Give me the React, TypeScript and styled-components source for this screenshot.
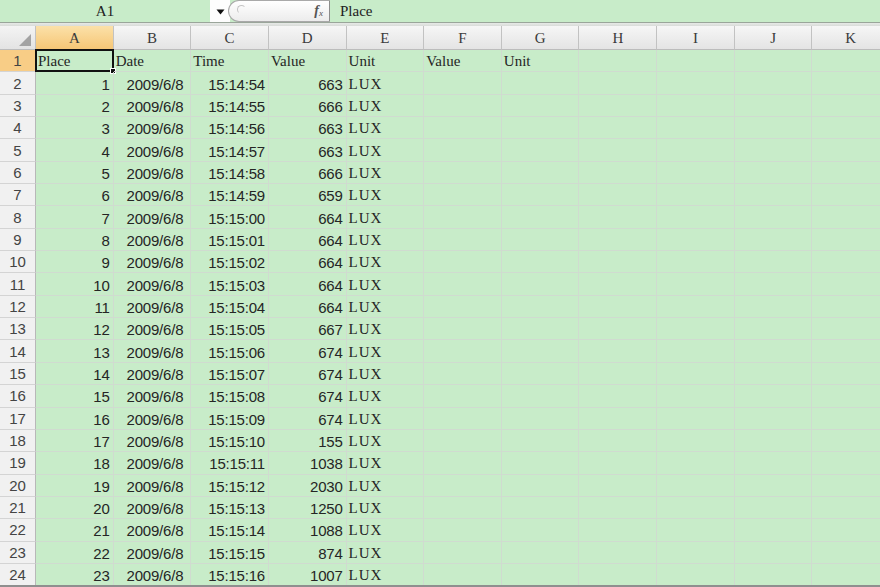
import React from 'react'
import styled, { createGlobalStyle, css } from 'styled-components'

const GlobalStyle = createGlobalStyle`
  html, body {
    margin: 0;
    padding: 0;
    background: #c8ecc9;
    overflow: hidden;
  }
  * {
    box-sizing: border-box;
  }
`

const columns = ['A', 'B', 'C', 'D', 'E', 'F', 'G', 'H', 'I', 'J', 'K']
const values = [663, 666, 663, 663, 666, 659, 664, 664, 664, 664, 664, 667, 674, 674, 674, 674, 155, 1038, 2030, 1250, 1088, 874, 1007]

const pad = (n: number) => (n < 10 ? `0${n}` : `${n}`)

const timeFor = (i: number) => {
  const total = 14 * 60 + 54 + i
  return `15:${pad(Math.floor(total / 60))}:${pad(total % 60)}`
}

type Kind = 'text' | 'num' | 'date' | 'unit'
type CellValue = { text: string; kind: Kind }

const buildRows = (): CellValue[][] => {
  const header: CellValue[] = ['Place', 'Date', 'Time', 'Value', 'Unit', 'Value', 'Unit'].map(t => ({
    text: t,
    kind: 'text' as const,
  }))
  const rows: CellValue[][] = [header]
  values.forEach((v, i) => {
    rows.push([
      { text: `${i + 1}`, kind: 'num' },
      { text: '2009/6/8', kind: 'date' },
      { text: timeFor(i), kind: 'num' },
      { text: `${v}`, kind: 'num' },
      { text: 'LUX', kind: 'unit' },
    ])
  })
  return rows
}

const App: React.FC = () => {
  const rows = buildRows()
  return (
    <>
      <GlobalStyle />
      <Page>
        <FormulaBar>
          <NameBox>A1</NameBox>
          <NameDrop>
            <svg width="9" height="6" viewBox="0 0 9 6">
              <path d="M0.5 0.5 L8.5 0.5 L4.5 5.5 Z" fill="#111" />
            </svg>
          </NameDrop>
          <FxPill>
            <Knob />
            <FxLabel>
              <i>f</i>
              <sub>x</sub>
            </FxLabel>
          </FxPill>
          <FormulaText>Place</FormulaText>
        </FormulaBar>
        <Strip />
        <Sheet>
          <Corner>
            <svg width="12" height="12" viewBox="0 0 12 12">
              <path d="M12 0 L12 12 L0 12 Z" fill="#a3a3a3" />
            </svg>
          </Corner>
          {columns.map((c, i) => (
            <ColHeader key={c} $active={i === 0}>
              {c}
            </ColHeader>
          ))}
          {rows.map((row, r) => (
            <React.Fragment key={r}>
              <RowHeader $active={r === 0}>{r + 1}</RowHeader>
              {columns.map((c, ci) => {
                const cell = row[ci]
                return (
                  <Cell key={c} $kind={cell ? cell.kind : 'text'}>
                    {cell ? cell.text : ''}
                    {r === 0 && ci === 0 && (
                      <Selection>
                        <FillHandle />
                      </Selection>
                    )}
                  </Cell>
                )
              })}
            </React.Fragment>
          ))}
        </Sheet>
        <BottomEdge />
      </Page>
    </>
  )
}

export default App

const Page = styled.div`
  width: 880px;
  height: 587px;
  overflow: hidden;
  position: relative;
  background: #c8ecc9;
`

const FormulaBar = styled.div`
  display: flex;
  align-items: stretch;
  height: 23px;
  background: #c8ecc9;
  border-bottom: 1px solid #9aa59a;
`

const NameBox = styled.div`
  width: 210px;
  display: flex;
  align-items: center;
  justify-content: center;
  font-family: 'Liberation Serif', serif;
  font-size: 15px;
  color: #222;
  padding-top: 1px;
`

const NameDrop = styled.div`
  width: 20px;
  background: #fdfdfd;
  display: flex;
  align-items: center;
  justify-content: center;
  padding-top: 2px;
`

const FxPill = styled.div`
  width: 102px;
  display: flex;
  align-items: center;
  justify-content: space-between;
  padding: 0 6px 0 6px;
  background: linear-gradient(#ffffff, #ececec);
  border: 1px solid #a9a9a9;
  border-right: 1px solid #8c8c8c;
  border-radius: 12px 0 0 12px;
  margin-left: -2px;
`

const Knob = styled.div`
  width: 9px;
  height: 9px;
  border-radius: 50%;
  border: 1px solid #c4c4c4;
  border-right-color: transparent;
  border-bottom-color: transparent;
  margin-top: -4px;
  margin-left: 2px;
`

const FxLabel = styled.div`
  font-family: 'Liberation Serif', serif;
  font-size: 14px;
  color: #555;
  i {
    font-weight: bold;
  }
  sub {
    font-size: 9px;
    font-style: italic;
    vertical-align: -1px;
  }
`

const FormulaText = styled.div`
  flex: 1;
  display: flex;
  align-items: center;
  padding-left: 10px;
  font-family: 'Liberation Serif', serif;
  font-size: 15px;
  color: #222;
  padding-top: 1px;
`

const Strip = styled.div`
  height: 3px;
  background: linear-gradient(#e6e9e6, #d9dcd9);
`

const Sheet = styled.div`
  display: grid;
  grid-template-columns: 36px repeat(11, 77.65px);
  grid-template-rows: 24px repeat(24, 22.35px);
`

const headerBase = css`
  display: flex;
  align-items: center;
  justify-content: center;
  color: #3a3a3a;
  border-right: 1px solid #c2c2c2;
  border-bottom: 1px solid #bcbcbc;
`

const Corner = styled.div`
  ${headerBase};
  align-items: flex-end;
  justify-content: flex-end;
  padding: 0 4px 3px 0;
  background: linear-gradient(#f4f4f4, #e3e3e3);
`

const ColHeader = styled.div<{ $active: boolean }>`
  ${headerBase};
  font-family: 'Liberation Serif', serif;
  font-size: 15px;
  padding-top: 2px;
  background: ${p => (p.$active ? 'linear-gradient(#fbe1a9, #f6c676)' : 'linear-gradient(#f6f6f6, #e4e4e4)')};
  border-bottom-color: ${p => (p.$active ? '#e1a54c' : '#bcbcbc')};
`

const RowHeader = styled.div<{ $active: boolean }>`
  ${headerBase};
  font-family: 'Liberation Sans', sans-serif;
  font-size: 15px;
  color: #444;
  border-bottom-color: #d4d4d4;
  background: ${p => (p.$active ? '#f8cd86' : '#f1f1f1')};
  border-right-color: ${p => (p.$active ? '#e1a54c' : '#b8b8b8')};
`

const Cell = styled.div<{ $kind: Kind }>`
  position: relative;
  display: flex;
  align-items: center;
  white-space: nowrap;
  color: #252525;
  font-size: 15px;
  border-right: 1px solid #d0dbd0;
  border-bottom: 1px solid #d0dbd0;
  padding-top: 2px;
  ${p =>
    p.$kind === 'text' || p.$kind === 'unit'
      ? css`
          font-family: 'Liberation Serif', serif;
          padding-left: 2px;
          letter-spacing: ${p.$kind === 'unit' ? '1px' : '0'};
        `
      : css`
          font-family: 'Liberation Sans', sans-serif;
          justify-content: flex-end;
          letter-spacing: -0.2px;
          padding-right: ${p.$kind === 'date' ? '7px' : '3px'};
        `}
`

const Selection = styled.div`
  position: absolute;
  left: -1px;
  top: -1px;
  right: -1px;
  bottom: -1px;
  border: 2px solid #111;
`

const FillHandle = styled.div`
  position: absolute;
  right: -4px;
  bottom: -4px;
  width: 6px;
  height: 6px;
  background: #111;
  border: 1px solid #fff;
`

const BottomEdge = styled.div`
  position: absolute;
  left: 0;
  right: 0;
  bottom: 0;
  height: 2px;
  background: #8f8f8f;
`
